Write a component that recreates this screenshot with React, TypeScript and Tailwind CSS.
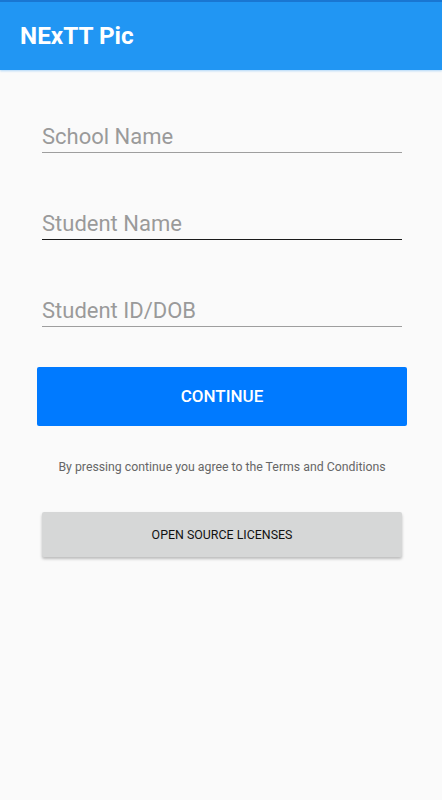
export default function App() {
  const fields = [
    { label: "School Name", line: "border-[#9e9e9e]" },
    { label: "Student Name", line: "border-[#1a1a1a]" },
    { label: "Student ID/DOB", line: "border-[#9e9e9e]" },
  ];

  return (
    <div className="min-h-[800px] w-full bg-[#fafafa] font-['Roboto',sans-serif]">
      {/* App bar */}
      <div className="border-t-2 border-[#1976d2] bg-[#2196f3] shadow-[0_1px_2px_rgba(33,150,243,0.35)]">
        <div className="flex h-[68px] items-center px-5">
          <h1 className="text-[24.3px] font-bold text-white">NExTT Pic</h1>
        </div>
      </div>

      {/* Form */}
      <div className="pl-[42px] pr-[40px] pt-[52px]">
        {fields.map((f, i) => (
          <div
            key={f.label}
            className={`border-b ${f.line} ${i > 0 ? "mt-[56px]" : ""}`}
          >
            <div className="h-[30px] text-[22px] leading-[29px] text-[#9a9a9a]">
              {f.label}
            </div>
          </div>
        ))}
      </div>

      <div className="pl-[37px] pr-[35px] pt-[40px]">
        <button className="flex h-[59px] w-full items-center justify-center rounded-[2px] bg-[#007aff] text-[17px] font-medium text-white">
          CONTINUE
        </button>
      </div>

      <p className="mt-[32px] pl-[2px] text-center text-[12.3px] text-[#666666]">
        By pressing continue you agree to the Terms and Conditions
      </p>

      <div className="pl-[42px] pr-[40px] pt-[36px]">
        <button className="flex h-[45px] w-full items-center justify-center rounded-[2px] bg-[#d6d7d7] text-[12.4px] text-[#111111] shadow-[0_2px_3px_rgba(0,0,0,0.25)]">
          OPEN SOURCE LICENSES
        </button>
      </div>
    </div>
  );
}
